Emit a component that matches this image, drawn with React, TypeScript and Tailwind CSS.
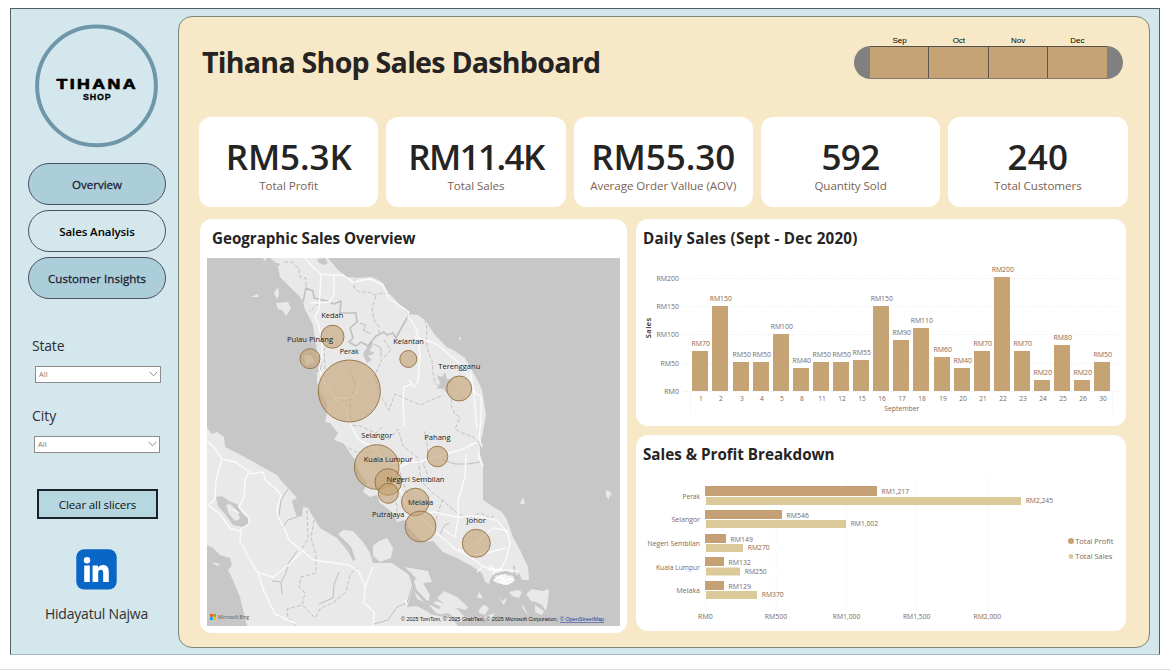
import React from "react";

type LabelProps = {
  x: number;
  y: number;
  w?: number;
  anchor?: "start" | "middle" | "end";
  className?: string;
  children: string;
};

/* A chart label; `w` fixes the advance width of the whole string. */
function Label({ x, y, w, anchor = "middle", className = "fill-[#7d6758] text-[7px]", children }: LabelProps) {
  return (
    <text x={x} y={y} textAnchor={anchor} textLength={w} lengthAdjust="spacingAndGlyphs" className={className}>
      {children}
    </text>
  );
}

const kpis = [
  { value: "RM5.3K", label: "Total Profit", tracking: "tracking-[-0.1px]" },
  { value: "RM11.4K", label: "Total Sales", tracking: "tracking-[-1.6px]" },
  { value: "RM55.30", label: "Average Order Vallue (AOV)", tracking: "tracking-[-0.05px]" },
  { value: "592", label: "Quantity Sold", tracking: "tracking-[-0.6px]" },
  { value: "240", label: "Total Customers", tracking: "tracking-[0.2px]" },
];

const daily: [number, number, number, number][] = [
  [1, 70, 700, 351], [2, 150, 720, 306], [3, 50, 741, 362], [4, 50, 761, 362], [5, 100, 781, 334],
  [8, 40, 801, 368], [11, 50, 821, 362], [12, 50, 841, 362], [15, 55, 861, 360], [16, 150, 881, 306],
  [17, 90, 901, 340], [18, 110, 921, 328], [19, 60, 942, 357], [20, 40, 962, 368], [21, 70, 982, 351],
  [22, 200, 1002, 277], [23, 70, 1022, 351], [24, 20, 1042, 380], [25, 80, 1062, 345], [26, 20, 1082, 380],
  [30, 50, 1102, 362],
];

const breakdown = [
  { name: "Perak", w: 17.5, ty: 499, py: 486, ph: 10, px: 877, profit: "RM1,217", sy: 497, sx: 1021, sales: "RM2,245" },
  { name: "Selangor", w: 28.5, ty: 522, py: 510, ph: 9, px: 782, profit: "RM546", sy: 520, sx: 846, sales: "RM1,002" },
  { name: "Negeri Sembilan", w: 52.5, ty: 546, py: 534, ph: 9, px: 726, profit: "RM149", sy: 544, sx: 743, sales: "RM270" },
  { name: "Kuala Lumpur", w: 44, ty: 570, py: 557, ph: 9, px: 724, profit: "RM132", sy: 567.5, sx: 740, sales: "RM250" },
  { name: "Melaka", w: 23.5, ty: 593, py: 581, ph: 9, px: 724, profit: "RM129", sy: 591, sx: 757, sales: "RM370" },
];

const bubbles: [number, number, number][] = [
  [332.5, 336.7, 11.5], [310, 358.7, 10], [349.3, 391, 31], [408.3, 359, 8.5], [459.2, 388.5, 12.5],
  [376.7, 467, 22.3], [388.2, 482, 13.3], [388.3, 493.3, 10], [415.3, 502, 13.8], [420.5, 526.5, 15.5],
  [437.5, 456.5, 10.3], [476.3, 543.3, 14],
];

const places: [string, number, number, number][] = [
  ["Kedah", 321.3, 318, 22], ["Pulau Pinang", 287, 342, 46], ["Perak", 339.7, 354, 19], ["Kelantan", 393.3, 344, 30.5],
  ["Terengganu", 438.3, 369, 42], ["Selangor", 361.3, 438, 31], ["Kuala Lumpur", 363.8, 462, 48.7],
  ["Negeri Sembilan", 386.5, 482, 58], ["Melaka", 408, 505, 25.3], ["Putrajaya", 372, 517, 32.3],
  ["Pahang", 424.3, 440, 26.3], ["Johor", 466.5, 523, 19.5],
];

function SalesMap() {
  return (
    <svg width="413" height="368" viewBox="207 258 413 368" className="block bg-[#c7c7c7]">
      <g className="fill-[#e9e9e9]">
        {/* peninsula */}
        <path d="M270 258L276 263 281 264 284 262 278 266 279 272 280 277 285 282 290 287 295 292 300 297 303 302 305 310 308 315 313 325 314 333 316 342 317 355 322 362 321 370 317 373 317 382 320 392 327 404 327 413 325 422 330 423 333 427 338 433 334 440 343 443 348 450 355 460 360 473 367 483 363 492 370 497 377 495 380 503 392 512 397 522 405 520 409 528 417 537 424 542 433 541 443 552 457 558 473 567 482 573 485 582 490 584 495 577 507 573 513 578 519 573 522 580 529 580 528 567 520 550 513 537 507 520 502 512 495 508 483 500 483 463 478 448 482 437 485 420 486 415 484 402 482 390 478 381 473 372 465 358 455 351 447 347 435 335 425 320 418 315 410 314 400 305 388 292 382 282 372 277 357 278 347 277 338 270 333 264 328 258Z" />
        {/* Sumatra */}
        <path d="M207 428L212 434 217 432 224 437 225 447 237 453 250 460 277 475 283 483 288 488 297 498 292 501 294 509 297 517 302 516 303 507 308 508 315 520 320 528 337 538 347 550 355 563 349 545 337 535 343 530 353 531 363 542 370 553 373 563 392 563 405 572 413 578 413 587 407 607 417 606 432 614 450 616 458 626 247 626 243 610 240 597 233 580 228 570 232 565 230 558 220 555 213 548 207 545Z" />
        <path d="M373 546L379 541 387 538 393 548 391 558 380 562 373 556Z" />
        <path d="M405 567L428 571 432 582 423 583 430 595 428 604 417 599 412 585 416 578Z" />
        <path d="M437 598L444 591 457 597 468 607 466 610 447 606ZM429 605L437 601 457 609 466 618 461 622 448 613 438 615Z" />
        <path d="M274 293L278 287 279 295 277 299ZM276 303L288 302 291 308 286 316 282 310 278 309ZM251 297L257 294 259 297ZM262 257L267 258 265 261Z" />
        <path d="M304 355L311 355 315 362 306 366ZM520 504L523 497 525 504ZM606 490L609 491 612 494 609 497 609 500 606 496ZM458 338L461 337 461 340Z" />
        <path d="M526 594L532 589 543 591 549 589 548 601 546 611 542 605 536 602 531 601ZM509 592L518 590 522 592 519 598 512 596ZM522 603L529 616 523 609ZM535 605L544 611 542 615 535 612ZM477 598L479 592 483 598ZM479 610L484 604 489 608 485 615 479 613ZM484 617L495 613 489 622ZM211 562L220 564 217 566ZM497 596L502 601 507 598 504 605Z" />
      </g>
      <g className="fill-[#c7c7c7]">
        <path d="M216 497L222 496 229 501 237 504 242 513 249 519 249 524 243 527 233 525 225 514 218 506Z" />
        <path d="M317 259L325 258 328 263 324 265 319 263ZM437 375L442 377 445 372 447 379 453 380 448 386 447 393 443 388 437 389 440 383Z" />
        <path d="M367 347L371 340 373 343 370 351 375 353 368 356 372 360 367 363 363 354ZM388 481L392 478 394 486 389 488Z" />
      </g>
      <path d="M226 505L230 504 238 512 240 519 235 521 229 514Z" className="fill-[#e9e9e9]" />
      {/* state and province borders */}
      <g className="fill-none stroke-[#bcbcbc] stroke-[0.9px]" strokeDasharray="4 2">
        <path d="M284 262L292 262 299 269 300 277 306 278 306 287M355 279L354 288 360 292 369 292 374 295 383 293 391 294M376 296L372 308 374 320 379 327 379 333M324 300L316 306 309 312M325 369L324 350 329 343M425 319L427 330 426 341 429 354 432 360 433 373 435 383 444 390 452 395 451 405 455 414 460 417 455 429 462 433 473 437 479 443" />
        <path d="M384 340L391 350 382 359 375 375 378 391 389 410 395 394 402 397 413 402 421 405 427 402 436 398 443 395M349 370L356 385 350 402 350 425 360 426 376 433 384 425M388 440L398 429 403 446 418 458 421 481 432 492 442 500 456 512 468 519 480 513 492 519 493 515M443 499L437 515 434 533M343 445L356 452 372 452M389 469L400 472 404 485 408 497M397 518L397 504 391 499M424 431L427 441 428 457 423 464 428 475" />
        <path d="M307 510L308 539 301 551M314 520L311 537 316 555 316 573 301 577 299 587 305 593 302 605 287 609 288 618 297 626M303 606L315 618 320 609 334 602 346 592 350 575 356 568" />
      </g>
      <g className="fill-none stroke-[#bfbfbf]" strokeLinejoin="round">
        <path d="M303 302L306 288 313 291 314 298 327 301 334 304 341 301 340 313 356 313 357 322 350 328 353 338 349 342 356 346 361 342 368 346 376 336 384 332 387 335 393 333 396 338 403 325 410 313" className="stroke-[1.6px]" />
        <path d="M297 517L288 520 282 528M288 489L281 500 279 516M297 551L288 564 286 573 281 583 282 594M272 581L281 582M319 604L333 598 334 585 339 572M374 624L388 620 397 607 407 603 413 584M443 460L455 464 468 464 480 462M440 534L445 525 449 523M360 323L366 325 363 330 371 334M374 344L381 348 381 357" />
        <path d="M337 535L350 548 354 560M410 573L415 590 425 601 440 608" className="stroke-[#c7c7c7] stroke-[3px]" />
        <path d="M514 566L515 578M479 600L485 605M430 613L449 617" className="stroke-[#c7c7c7] stroke-2" />
      </g>
      {/* roads */}
      <g className="fill-none stroke-[#fafafa] stroke-[1.4px]" strokeLinejoin="round">
        <path d="M305 258L314 268 321 274 335 275 343 275 353 282 370 279 383 285 389 299 402 307 409 312 408 319M414 337L429 341 438 345 450 355 462 366 469 377 475 393 481 397 481 420 479 438 482 447" />
        <path d="M321 275L320 291 319 309 315 317 319 326 322 341 322 355 319 369 325 383 334 398 346 408 350 424 359 440 375 448 392 469 398 485 406 504 423 519 438 534 455 549 472 558 484 567 493 569 503 570 518 571" />
        <path d="M334 276L334 295 329 302M310 303L331 302M335 398L350 398 357 392 359 379M410 318L417 331 420 354 418 382 414 387 409 380M404 426L403 399 404 387 413 384M392 463L419 462 446 454 463 449 477 442M479 446L479 458 483 466M466 453L465 477 458 501 458 519 455 536M443 529L456 538M405 515L434 512 456 517 477 516 497 520 508 534 510 543 506 560 500 570M475 544L493 528 509 531M458 549L470 555 487 553 506 548M484 565L477 572M470 371L473 386 475 407 477 429M394 469L407 464 415 459" />
        <path d="M207 441L214 447 222 459 235 462 246 469 249 474 263 472 266 481 275 488 281 495 277 508 278 517 285 530 289 540 303 551 313 560 334 563 349 565 359 572 365 586 364 603 374 612 373 626" />
        <path d="M250 470L245 480 244 497 239 507 249 518 249 524 241 529 240 541 249 558 257 572 273 577 291 563 302 551M222 459L216 480 215 500 208 505 220 514 230 528 241 532M258 573L264 591 275 614 297 624M365 587L373 567M233 509L239 513" />
      </g>
      {/* Singapore */}
      <path d="M490 583L494 575 506 572 514 575 519 579" className="fill-none stroke-[#c2c2c2] stroke-2" />
      <path d="M493 581L497 576 505 574 513 577 515 580 508 585 501 584Z" className="fill-[#f4f4f4]" />
      <g className="fill-none stroke-white stroke-[1.2px]">
        <path d="M494 580L500 577 505 580 511 579 514 581M497 583L504 581 506 584 513 582M501 575L504 585M490 565L495 570 493 575M488 569L498 571 502 568M405 600L407 605" />
      </g>
      <g className="fill-[#c5a072]/60 stroke-[#91703f] stroke-[0.9px]">
        {bubbles.map(([x, y, r]) => (
          <circle key={`${x}-${y}`} cx={x} cy={y} r={r} />
        ))}
      </g>
      {places.map(([name, x, y, w]) => (
        <Label key={name} x={x} y={y} w={w} anchor="start" className="fill-[#202020] text-[7.6px]">
          {name}
        </Label>
      ))}
      <rect x="210" y="614" width="2.8" height="2.8" className="fill-[#f25022]" />
      <rect x="213.2" y="614" width="2.8" height="2.8" className="fill-[#7fba00]" />
      <rect x="210" y="617.2" width="2.8" height="2.8" className="fill-[#00a4ef]" />
      <rect x="213.2" y="617.2" width="2.8" height="2.8" className="fill-[#ffb900]" />
      <Label x={218} y={619.3} w={31} anchor="start" className="fill-[#555] text-[5.3px]">Microsoft Bing</Label>
      <Label x={401} y={621} w={157} anchor="start" className="fill-[#161616] font-['Liberation_Sans'] text-[5.5px]">
        © 2025 TomTom, © 2025 GrabTaxi, © 2025 Microsoft Corporation,
      </Label>
      <Label x={560} y={621} w={44} anchor="start" className="fill-[#24409c] font-['Liberation_Sans'] text-[5.5px] underline">
        © OpenStreetMap
      </Label>
    </svg>
  );
}

function DailyChart() {
  const ticks: [string, number, number][] = [
    ["RM200", 278.5, 22.5], ["RM150", 306.5, 22.5], ["RM100", 334.5, 22.5], ["RM50", 363.5, 18.5], ["RM0", 391.5, 14.8],
  ];
  return (
    <svg width="490" height="166" viewBox="636 255 490 166" className="block">
      {ticks.map(([t, y, w]) => (
        <g key={t}>
          <line x1="684" x2="1119" y1={y} y2={y} strokeDasharray="1 2" className="stroke-[#eaeaea]" />
          <Label x={679} y={y + 2.7} w={w} anchor="end">{t}</Label>
        </g>
      ))}
      <path d="M690.5 392V416M1112.5 392V416" strokeDasharray="1 2" className="stroke-[#eaeaea]" />
      {daily.map(([day, v, x, top]) => (
        <g key={day}>
          <rect x={x - 8} y={top} width="16" height={391 - top} className="fill-[#c5a374]" />
          <Label x={x + 0.8} y={top - 5} w={v >= 100 ? 22.3 : 18.5}>{`RM${v}`}</Label>
          <Label x={x + 1} y={401} w={day > 9 ? 7.6 : 3.8}>{String(day)}</Label>
        </g>
      ))}
      <Label x={901.8} y={411} w={35}>September</Label>
      <text transform="translate(651 328) rotate(-90)" textAnchor="middle" textLength="20.5" className="fill-[#252423] text-[7.6px] font-semibold">
        Sales
      </text>
    </svg>
  );
}

function BreakdownChart() {
  const ticks: [string, number, number][] = [
    ["RM0", 705.5, 14.8], ["RM500", 776, 22.3], ["RM1,000", 846.5, 27.5], ["RM1,500", 916.7, 27.5], ["RM2,000", 987.3, 27.5],
  ];
  return (
    <svg width="490" height="156" viewBox="636 470 490 156" className="block">
      {ticks.map(([t, x, w]) => (
        <g key={t}>
          <line x1={x} x2={x} y1="477" y2="610" strokeDasharray="1 2" className="stroke-[#ececec]" />
          <Label x={x} y={619} w={w}>{t}</Label>
        </g>
      ))}
      {breakdown.map((r) => (
        <g key={r.name}>
          <Label x={700} y={r.ty} w={r.w} anchor="end">{r.name}</Label>
          <rect x="705" y={r.py} width={r.px - 705} height={r.ph} className="fill-[#c5a074]" />
          <rect x="706" y={r.sy} width={r.sx - 706} height="8" className="fill-[#dcc999]" />
          <Label x={r.px + 4.6} y={r.py + 7.7} w={r.profit.length > 5 ? 27.5 : 22.3} anchor="start">{r.profit}</Label>
          <Label x={r.sx + 4.7} y={r.sy + 6.3} w={r.sales.length > 5 ? 27.3 : 22} anchor="start">{r.sales}</Label>
        </g>
      ))}
      <circle cx="1071" cy="541" r="3" className="fill-[#c5a074]" />
      <circle cx="1071" cy="556.5" r="2.4" className="fill-[#dcc999]" />
      <Label x={1075.3} y={544} w={38} anchor="start" className="fill-[#7d6758] text-[7.6px]">Total Profit</Label>
      <Label x={1075.3} y={559} w={37} anchor="start" className="fill-[#7d6758] text-[7.6px]">Total Sales</Label>
    </svg>
  );
}

function Slicer({ className }: { className: string }) {
  return (
    <div className={`flex h-[17px] w-[126px] items-center justify-between border border-[#8c8c8c] bg-white pr-[2px] pl-[3px] ${className}`}>
      <span className="pt-px text-[7.5px] text-[#8b7565]">All</span>
      <svg width="9" height="6" viewBox="0 0 9 6" className="fill-none stroke-[#8b7c70] stroke-[0.9px]">
        <path d="M0.6 0.8L4.5 4.8 8.4 0.8" />
      </svg>
    </div>
  );
}

function Sidebar() {
  const nav = "flex h-[42px] w-[138px] items-center justify-center rounded-[21px] border border-[#4c5360] pt-[2px] text-[11.5px] leading-none";
  return (
    <aside className="flex w-[167px] shrink-0 flex-col">
      <svg width="124" height="124" viewBox="0 0 124 124" className="mt-[15px] ml-[24px] shrink-0">
        <circle cx="61.5" cy="61.8" r="59.4" className="fill-none stroke-[#6f97aa] stroke-[4px]" />
        <text x="62.2" y="64.6" textAnchor="middle" textLength="81.5" lengthAdjust="spacingAndGlyphs" className="fill-black stroke-black stroke-[0.7px] font-['Liberation_Sans'] text-[14.8px] font-bold tracking-[2px]">
          TIHANA
        </text>
        <text x="62.2" y="76.4" textAnchor="middle" textLength="28.5" lengthAdjust="spacingAndGlyphs" className="fill-black stroke-black stroke-[0.3px] font-['Liberation_Sans'] text-[8.4px] font-bold tracking-[0.8px]">
          SHOP
        </text>
      </svg>
      <nav className="mt-[14.5px] ml-[17px] flex flex-col gap-[5.3px]">
        <button className={`${nav} bg-[#abceda] text-[#1e2233] [-webkit-text-stroke:0.3px]`}>Overview</button>
        <button className={`${nav} font-semibold tracking-[-0.1px] text-black`}>Sales Analysis</button>
        <button className={`${nav} bg-[#abceda] tracking-[0.05px] text-[#1e2233] [-webkit-text-stroke:0.3px]`}>Customer Insights</button>
      </nav>
      <div className="mt-[36.5px] ml-[21px] text-[14px] leading-5 tracking-[-0.2px] text-[#2f2f2f]">State</div>
      <Slicer className="mt-[10px] ml-[24px]" />
      <div className="mt-[23px] ml-[21px] text-[14px] leading-5 text-[#2f2f2f]">City</div>
      <Slicer className="mt-[10px] ml-[23px]" />
      <button className="mt-[36px] ml-[26px] h-[30px] w-[121px] border-2 border-[#1d1f29] bg-[#b6d7df] pt-[2px] text-[11.6px] leading-none tracking-[-0.15px] text-[#111]">
        Clear all slicers
      </button>
      <svg width="41" height="41" viewBox="0 0 41 41" className="mt-[30px] ml-[65px] shrink-0">
        <rect x="0.3" y="0.2" width="40.4" height="40.4" rx="8" className="fill-[#0866c6]" />
        <circle cx="11" cy="11.3" r="3.2" className="fill-white" />
        <path d="M8.2 16.5H13.8V33H8.2ZM16.6 16.5H22V18.7C23 17.1 24.8 16.1 27.1 16.1C31.5 16.1 32.8 19 32.8 23.4V33H27.2V24.5C27.2 22.2 26.8 20.8 24.8 20.8C22.9 20.8 22.2 22.2 22.2 24.4V33H16.6Z" className="fill-white" />
      </svg>
      <div className="mt-[14px] pl-1 text-center text-[14px] leading-5 tracking-[-0.2px] whitespace-nowrap text-[#2f2f2f]">Hidayatul Najwa</div>
    </aside>
  );
}

function Timeline() {
  return (
    <div className="w-[269px]">
      <div className="mx-[16px] grid grid-cols-4 pt-px text-center font-['Liberation_Sans'] text-[8px] leading-[10px] text-black">
        <span>Sep</span>
        <span>Oct</span>
        <span>Nov</span>
        <span>Dec</span>
      </div>
      <div className="flex h-[33px] overflow-hidden rounded-full bg-[#808080] px-[16px]">
        <div className="grid flex-1 grid-cols-4 divide-x divide-[#5d5752] border-y border-t-[#55504e] border-b-[#85776a] bg-[#c5a374]">
          <span />
          <span />
          <span />
          <span />
        </div>
      </div>
    </div>
  );
}

export default function App() {
  const heading = "text-[15.2px] leading-5 font-bold text-[#252423] whitespace-nowrap";
  return (
    <div className="h-[670px] w-[1170px] overflow-hidden border-b border-[#dedede] bg-white pt-2 pl-[10px] font-['Open_Sans','Noto_Sans',sans-serif]">
      <div className="flex h-[647px] w-[1150px] border border-[#4f6067] border-b-[#a5b7bf] bg-[#d4e7ec]">
        <Sidebar />
        <main className="mt-[7px] h-[632px] w-[972px] rounded-[14px] border border-[#7c8579] bg-[#f7e8c7] pl-[20px]">
          <header className="flex h-[99.6px] items-start justify-between pr-[26px]">
            <h1 className="mt-[25px] ml-[3px] text-[28.6px] leading-10 font-bold tracking-[-0.75px] whitespace-nowrap text-[#252423]">
              Tihana Shop Sales Dashboard
            </h1>
            <div className="mt-[18px]">
              <Timeline />
            </div>
          </header>
          <section className="grid w-[928.5px] grid-cols-5 gap-2">
            {kpis.map((k) => (
              <div key={k.label} className="flex h-[90.4px] flex-col items-center rounded-[12px] bg-white whitespace-nowrap">
                <div className={`mt-[20.4px] text-[35px] leading-10 font-semibold text-[#252423] ${k.tracking}`}>{k.value}</div>
                <div className="mt-px text-[11.6px] leading-4 tracking-[-0.06px] text-[#7a6353]">{k.label}</div>
              </div>
            ))}
          </section>
          <div className="mt-[12.5px] ml-[1px] flex gap-[9px]">
            <section className="h-[413.5px] w-[427px] rounded-[12px] bg-white pl-[7px]">
              <h2 className={`${heading} pt-[9px] pb-[9.5px] pl-[5px] tracking-[-0.04px]`}>Geographic Sales Overview</h2>
              <SalesMap />
            </section>
            <div className="flex flex-col gap-[9px]">
              <section className="h-[206.5px] w-[490px] rounded-[12px] bg-white">
                <h2 className={`${heading} pt-[9px] pb-[6.5px] pl-[7px] tracking-[0.22px]`}>Daily Sales (Sept - Dec 2020)</h2>
                <DailyChart />
              </section>
              <section className="h-[196px] w-[490px] rounded-[12px] bg-white">
                <h2 className={`${heading} pt-[9px] pb-[6px] pl-[7px]`}>Sales &amp; Profit Breakdown</h2>
                <BreakdownChart />
              </section>
            </div>
          </div>
        </main>
      </div>
    </div>
  );
}
